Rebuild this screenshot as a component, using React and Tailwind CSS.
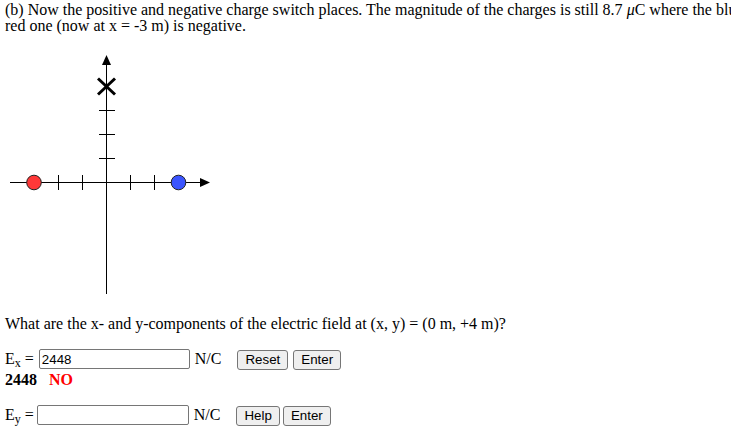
import React from "react";

function Diagram() {
  const xt = [58.5, 82.5, 130.5, 154.5];
  const yt = [60.5, 84.5, 108.5];
  return (
    <svg width="230" height="250" viewBox="0 0 230 250" className="block">
      <g stroke="#000" strokeWidth="1" shapeRendering="crispEdges">
        <line x1="10" y1="132.5" x2="202" y2="132.5" />
        <line x1="106.5" y1="12" x2="106.5" y2="244" />
        {xt.map((x) => (
          <line key={x} x1={x} y1="124.5" x2={x} y2="139.5" />
        ))}
        {yt.map((y) => (
          <line key={y} x1="98.5" y1={y} x2="114.5" y2={y} />
        ))}
      </g>
      <polygon points="210,132.5 200,128 200,137" fill="#000" />
      <polygon points="106.5,5 102,15 111,15" fill="#000" />
      <g stroke="#000" strokeWidth="3">
        <line x1="98" y1="28.5" x2="115" y2="44.5" />
        <line x1="115" y1="28.5" x2="98" y2="44.5" />
      </g>
      <circle cx="34" cy="132.5" r="7.3" fill="#ff3838" stroke="#222" strokeWidth="1" />
      <circle cx="178.5" cy="132.5" r="7.3" fill="#3b55ff" stroke="#222" strokeWidth="1" />
    </svg>
  );
}

function Btn({ children, className = "" }) {
  return (
    <button
      className={
        "h-[20px] px-[7px] bg-[#efefef] border border-[#767676] rounded-[3px] text-[13.333px] leading-[16px] text-black " +
        className
      }
      style={{ fontFamily: '"Liberation Sans", Arial, sans-serif' }}
    >
      {children}
    </button>
  );
}

export default function App() {
  const serif = { fontFamily: '"Liberation Serif", "Times New Roman", serif' };
  return (
    <div className="w-[731px] h-[443px] overflow-hidden bg-white text-black text-[16px]" style={serif}>
      <div className="h-[50px] pl-[5px] pt-[2px] leading-[16px] whitespace-nowrap">
        (b) Now the positive and negative charge switch places. The magnitude of the charges is still 8.7 <i>μ</i>C where the blue one (now at x = +3 m) is positive and the
        <br />
        red one (now at x = -3 m) is negative.
      </div>
      <Diagram />
      <div className="mt-[15px] pl-[5px] leading-[18px]">
        What are the x- and y-components of the electric field at (x, y) = (0 m, +4 m)?
      </div>
      <div className="mt-[16px] h-[20px] pl-[5px] flex items-baseline">
        <span className="leading-[18px]">
          E<sub className="text-[12px]">x</sub> =
        </span>
        <input
          defaultValue="2448"
          className="ml-[5px] w-[151px] h-[20px] border border-[#767676] rounded-[2px] px-[2px] text-[13.333px] outline-none"
          style={{ fontFamily: '"Liberation Sans", Arial, sans-serif' }}
        />
        <span className="ml-[5px] leading-[18px]">N/C</span>
        <Btn className="ml-[16px]">Reset</Btn>
        <Btn className="ml-[5px]">Enter</Btn>
      </div>
      <div className="mt-[2px] pl-[5px] leading-[18px] font-bold">
        2448<span className="ml-[12px] text-[#ff0000]">NO</span>
      </div>
      <div className="mt-[16px] h-[20px] pl-[5px] flex items-baseline">
        <span className="leading-[18px]">
          E<sub className="text-[12px]">y</sub> =
        </span>
        <input
          defaultValue=""
          className="ml-[3px] w-[152px] h-[20px] border border-[#767676] rounded-[2px] px-[2px] text-[13.333px] outline-none"
          style={{ fontFamily: '"Liberation Sans", Arial, sans-serif' }}
        />
        <span className="ml-[5px] leading-[18px]">N/C</span>
        <Btn className="ml-[16px]">Help</Btn>
        <Btn className="ml-[3px]">Enter</Btn>
      </div>
    </div>
  );
}
